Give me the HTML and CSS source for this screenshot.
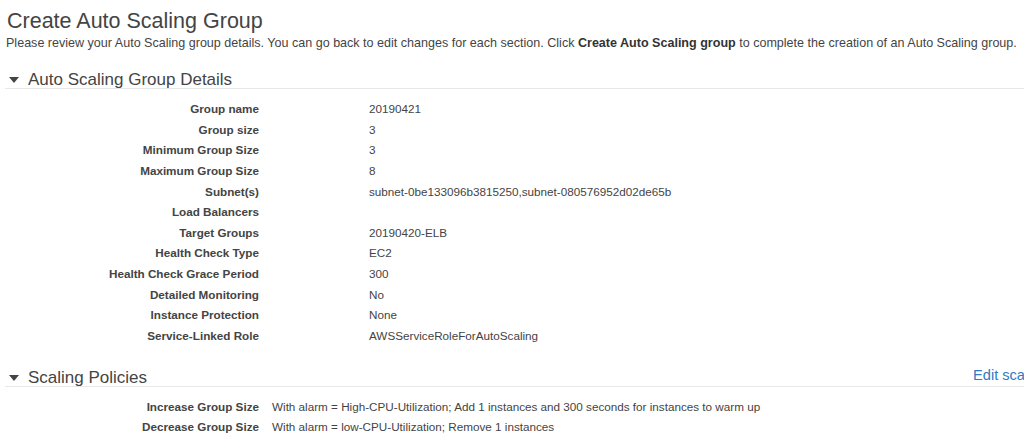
FILE: index.html
```html
<!DOCTYPE html>
<html>
<head>
<meta charset="utf-8">
<link rel="stylesheet" href="styles.css">
</head>
<body>
<div class="page">
  <h1 class="title">Create Auto Scaling Group</h1>
  <p class="intro">Please review your Auto Scaling group details. You can go back to edit changes for each section. Click <b>Create Auto Scaling group</b> to complete the creation of an Auto Scaling group.</p>

  <section class="section">
    <div class="sec-head">
      <h2 class="sec-title"><span class="caret"></span>Auto Scaling Group Details</h2>
    </div>
    <div class="details">
      <div class="lbl">Group name</div><div class="val">20190421</div>
      <div class="lbl">Group size</div><div class="val">3</div>
      <div class="lbl">Minimum Group Size</div><div class="val">3</div>
      <div class="lbl">Maximum Group Size</div><div class="val">8</div>
      <div class="lbl">Subnet(s)</div><div class="val">subnet-0be133096b3815250,subnet-080576952d02de65b</div>
      <div class="lbl">Load Balancers</div><div class="val"></div>
      <div class="lbl">Target Groups</div><div class="val">20190420-ELB</div>
      <div class="lbl">Health Check Type</div><div class="val">EC2</div>
      <div class="lbl">Health Check Grace Period</div><div class="val">300</div>
      <div class="lbl">Detailed Monitoring</div><div class="val">No</div>
      <div class="lbl">Instance Protection</div><div class="val">None</div>
      <div class="lbl">Service-Linked Role</div><div class="val">AWSServiceRoleForAutoScaling</div>
    </div>
  </section>

  <section class="section">
    <div class="sec-head">
      <h2 class="sec-title"><span class="caret"></span>Scaling Policies</h2>
      <a class="edit" href="#">Edit scaling policies</a>
    </div>
    <div class="policies">
      <div class="lbl">Increase Group Size</div><div class="val">With alarm = High-CPU-Utilization; Add 1 instances and 300 seconds for instances to warm up</div>
      <div class="lbl">Decrease Group Size</div><div class="val">With alarm = low-CPU-Utilization; Remove 1 instances</div>
    </div>
  </section>
</div>
</body>
</html>
```
FILE: styles.css
```css
html, body {
  margin: 0;
  padding: 0;
  background: #fff;
  overflow: hidden;
}
body {
  font-family: "Liberation Sans", Arial, sans-serif;
  color: #444;
  font-size: 11.7px;
}
.page {
  width: 1100px;
  padding: 8px 0 0 7px;
}
.title {
  margin: 0;
  font-size: 21.5px;
  font-weight: normal;
  line-height: 27px;
  color: #444;
}
.intro {
  margin: 0 0 0 -1px;
  font-size: 12.55px;
  line-height: 16px;
  white-space: nowrap;
}
.intro b { color: #333; }
.section + .section { margin-top: 2px; }
.sec-head {
  display: flex;
  align-items: flex-end;
  border-bottom: 1px solid #e8e8e8;
  margin-left: -2px;
  padding-top: 20px;
}
.sec-title {
  margin: 0;
  font-size: 17px;
  font-weight: normal;
  line-height: 17px;
  display: flex;
  align-items: center;
  color: #444;
}
.caret {
  width: 0;
  height: 0;
  border-left: 5px solid transparent;
  border-right: 5px solid transparent;
  border-top: 6px solid #444;
  margin: 1px 9px 0 4px;
}
.edit {
  margin-left: 826px;
  margin-bottom: 5px;
  color: #3079c6;
  text-decoration: none;
  font-size: 14.6px;
  line-height: 12px;
  white-space: nowrap;
}
.details,
.policies {
  display: grid;
  grid-template-columns: 252px auto;
  padding-top: 10px;
}
.details { column-gap: 110px; }
.policies { column-gap: 13px; }
.lbl {
  text-align: right;
  font-weight: bold;
  line-height: 20.64px;
  white-space: nowrap;
}
.val {
  line-height: 20.64px;
  white-space: nowrap;
}
```
